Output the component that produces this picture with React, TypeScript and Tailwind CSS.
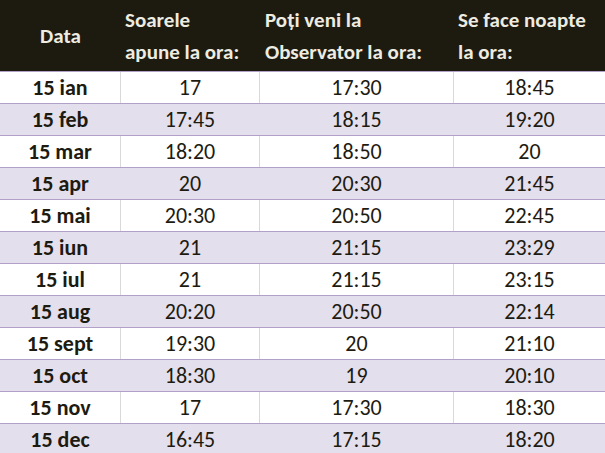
import React from "react";

const rows: [string, string, string, string][] = [
  ["15 ian", "17", "17:30", "18:45"],
  ["15 feb", "17:45", "18:15", "19:20"],
  ["15 mar", "18:20", "18:50", "20"],
  ["15 apr", "20", "20:30", "21:45"],
  ["15 mai", "20:30", "20:50", "22:45"],
  ["15 iun", "21", "21:15", "23:29"],
  ["15 iul", "21", "21:15", "23:15"],
  ["15 aug", "20:20", "20:50", "22:14"],
  ["15 sept", "19:30", "20", "21:10"],
  ["15 oct", "18:30", "19", "20:10"],
  ["15 nov", "17", "17:30", "18:30"],
  ["15 dec", "16:45", "17:15", "18:20"],
];

export default function App() {
  return (
    <div
      className="w-[605px] h-[453px] overflow-hidden bg-white text-[21px] text-[#1d1b10]"
      style={{ fontFamily: '"Carlito", "Lato", sans-serif' }}
    >
      <div className="flex h-[72px] bg-[#1d1b10] border-b border-[#b1a0c7] text-[#eeece1] font-bold leading-[32px]">
        <div className="w-[121px] flex items-center justify-center">Data</div>
        <div className="w-[139px] flex items-center pl-[4px]">
          <div>
            Soarele
            <br />
            apune la ora:
          </div>
        </div>
        <div className="w-[194px] flex items-center pl-[5px]">
          <div>
            Poți veni la
            <br />
            Observator la ora:
          </div>
        </div>
        <div className="flex-1 flex items-center pl-[4px] whitespace-nowrap">
          <div>
            Se face noapte
            <br />
            la ora:
          </div>
        </div>
      </div>
      {rows.map((r, i) => {
        const odd = i % 2 === 1;
        const vline = odd ? "border-r border-[#e4dfec]" : "border-r border-[#d9d9d9]";
        return (
          <div
            key={r[0]}
            className={
              "flex h-[32px] border-b border-[#b1a0c7] leading-[31px] text-[22px] " +
              (odd ? "bg-[#e4dfec]" : "bg-white")
            }
          >
            <div className={"w-[121px] text-center font-bold " + vline}>{r[0]}</div>
            <div className={"w-[139px] text-center " + vline}>{r[1]}</div>
            <div className={"w-[194px] text-center " + vline}>{r[2]}</div>
            <div className="flex-1 text-center">{r[3]}</div>
          </div>
        );
      })}
    </div>
  );
}
